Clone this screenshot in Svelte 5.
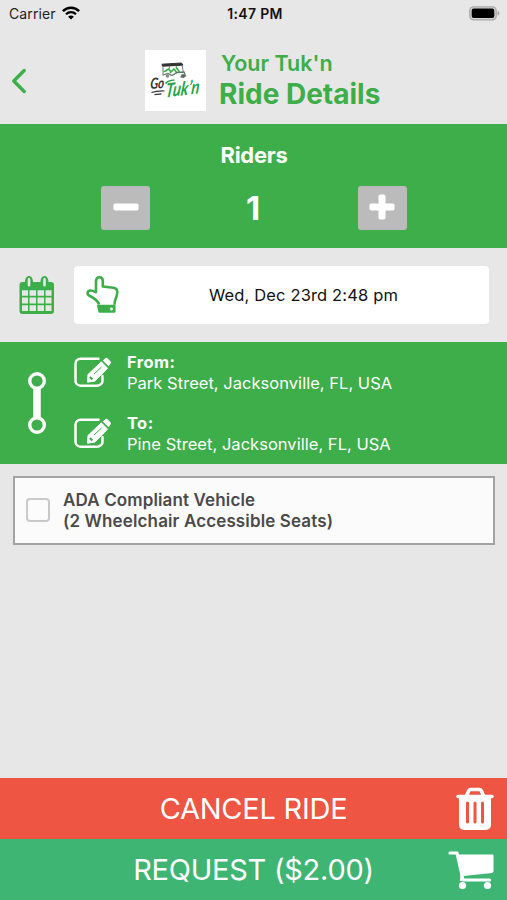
<script>
  let riders = $state(1);
  let ada = $state(false);
  const stops = [
    { label: 'From:', address: 'Park Street, Jacksonville, FL, USA' },
    { label: 'To:', address: 'Pine Street, Jacksonville, FL, USA' }
  ];
</script>

<div class="screen">
  <div class="status">
    <div class="carrier">
      <span>Carrier</span>
      <svg width="18" height="14" viewBox="0 0 18 14" fill="none" stroke="#000">
        <path d="M.9 5.1C5.4.5 12.6.5 17.1 5.1" stroke-width="2.5" />
        <path d="M4 8.2c2.8-2.8 7.2-2.8 10 0" stroke-width="2.3" />
        <path d="M9 13.6 6.1 10.7c1.6-1.5 4.2-1.5 5.8 0Z" fill="#000" stroke="none" />
      </svg>
    </div>
    <span class="time">1:47 PM</span>
    <svg class="battery" width="32" height="15" viewBox="0 0 32 15">
      <rect x=".8" y=".8" width="26.4" height="13" rx="3.8" fill="#d4d4d4" stroke="#a8a8a8" stroke-width="1.3" />
      <rect x="2.7" y="2.6" width="22.6" height="9.4" rx="2" fill="#000" />
      <path d="M28.6 5c2.4.6 2.4 4 0 4.6Z" fill="#a0a0a0" />
    </svg>
  </div>

  <header>
    <svg class="back" width="16" height="26" viewBox="0 0 16 26" fill="none" stroke="#3dae49" stroke-width="3.4" stroke-linecap="round" stroke-linejoin="round">
      <path d="M13.2 2.500 2.800 13l10.400 10.500" />
    </svg>
    <svg class="logo" width="61" height="61" viewBox="0 0 61 61">
      <rect width="61" height="61" fill="#fff" />
      <path d="M17 14.200 36.500 13 38 15.200 17.500 16.200Z" fill="#333" stroke="#333" />
      <path d="M18 16v9.500M24.500 16l-.5 3M31 15.500l1 4M37 15l1.500 8" stroke="#777" stroke-width="1" fill="none" />
      <path d="M18.500 21.500c3 .5 3-3 5.500-2l2.500 3M25 23l4-4 3 4M31 17l3.500 5" stroke="#3dae49" stroke-width="1.600" fill="none" />
      <path d="m18 25 5-1.500 4 2 5-3 7-.5 1.500 4-5 1" stroke="#5c7d62" stroke-width="1.300" fill="none" />
      <circle cx="22.500" cy="26" r="1.800" fill="#888" />
      <circle cx="38" cy="26" r="2" fill="#666" />
      <text transform="translate(5 39) rotate(-4) skewX(-8)" class="go" textLength="14" lengthAdjust="spacingAndGlyphs">Go</text>
      <path d="M6.500 42.500c4-1.300 8-1.700 13-1.500M9.500 44.600l7-.8" stroke="#333" stroke-width="1.200" fill="none" />
      <text transform="translate(20 47.500) rotate(-7) skewX(-14)" class="tuk" textLength="34" lengthAdjust="spacingAndGlyphs">Tuk’n</text>
      <path d="M20.500 33.500c2-2.400 5-3.200 9-3.500" stroke="#27a44a" stroke-width="1.600" fill="none" />
    </svg>
    <div class="titles">
      <span class="small">Your Tuk'n</span>
      <span class="big">Ride Details</span>
    </div>
  </header>

  <section class="riders">
    <span class="riders-label">Riders</span>
    <div class="stepper">
      <button aria-label="Fewer riders" onclick={() => (riders = Math.max(1, riders - 1))}>
        <svg width="26" height="26" viewBox="0 0 26 26"><rect x=".5" y="9.500" width="25" height="7" rx="1.800" fill="#fff" /></svg>
      </button>
      <span class="count">{riders}</span>
      <button aria-label="More riders" onclick={() => (riders += 1)}>
        <svg width="26" height="26" viewBox="0 0 26 26" fill="#fff"><rect x=".5" y="9.500" width="25" height="7" rx="1.800" /><rect x="9.500" y=".5" width="7" height="25" rx="1.800" /></svg>
      </button>
    </div>
  </section>

  <section class="when">
    <svg class="calendar" width="36" height="39" viewBox="0 0 36 39">
      <path fill="#3dae49" fill-rule="evenodd" d="M3.500 6H6c0-8 8-8 8 0h7.500c0-8 8-8 8 0H32a3 3 0 0 1 3 3v26a3 3 0 0 1-3 3H3.500a3 3 0 0 1-3-3V9a3 3 0 0 1 3-3Z" />
      <path fill="#e7e7e7" d="M8.700 4c0-3 2.600-3 2.600 0v5c0 2-2.600 2-2.600 0ZM24.200 4c0-3 2.600-3 2.600 0v5c0 2-2.600 2-2.600 0ZM3 14.200h6v5.500H3Zm7.500 0H17v5.500h-6.500Zm8 0H25v5.500h-6.500Zm8 0h6v5.500h-6ZM3 21.500h6v6H3Zm7.500 0H17v6h-6.500Zm8 0H25v6h-6.500Zm8 0h6v6h-6ZM3 29.300h6v5.700H3Zm7.500 0H17V35h-6.500Zm8 0H25V35h-6.500Zm8 0h6V35h-6Z" />
    </svg>
    <div class="date">
      <svg width="34" height="38" viewBox="0 0 34 38" fill="none" stroke="#3dae49" stroke-width="2.600" stroke-linejoin="round">
        <path d="M13 28.500C12 24.500 9 22.500 3 19.500c-2.500-1.500-1.500-5 1.500-5 2 0 4 1 5.500 1.700V5c0-5 6.800-5 6.800 0v5.500l10.700 1.200c3 .5 4 2.500 3.700 5-.3 5.500-2.700 6-2.700 12" />
        <path d="M12.300 30h16v5.500H13.600Z" fill="#3dae49" />
        <circle cx="25.500" cy="33" r="1.400" fill="#fff" stroke="none" />
      </svg>
      <span>Wed, Dec 23rd 2:48 pm</span>
    </div>
  </section>

  <section class="route">
    <svg class="line" width="20" height="64" viewBox="0 0 20 64" fill="none" stroke="#fff">
      <path d="M10 16v32" stroke-width="7.500" />
      <circle cx="10" cy="10" r="7.300" stroke-width="3.400" />
      <circle cx="10" cy="54" r="7.300" stroke-width="3.400" />
    </svg>
    <div class="stops">
      {#each stops as stop}
        <div class="stop">
          <svg width="38" height="31" viewBox="0 0 38 31">
            <path d="M24.500 1.700H6.500a5 5 0 0 0-5 5v17a5 5 0 0 0 5 5h17a5 5 0 0 0 5-5V19" fill="none" stroke="#fff" stroke-width="2.500" stroke-linecap="round" />
            <path d="M14 17.500 27.300 4.800l6.200 6.400L21 24l-7.500 1.200Z" fill="#fff" stroke="#fff" stroke-linejoin="round" />
            <path d="m28.800 3.500 2.500-2.300c.7-.6 1.500-.6 2.200 0l3 3.100c.7.700.7 1.500 0 2.200L34.600 9.200Z" fill="#fff" />
            <path d="m20 17 7.500-7" stroke="#3dae49" stroke-width="1" />
            <path d="m15.800 20 2.600 2.500" stroke="#3dae49" stroke-width="2" />
          </svg>
          <div class="place">
            <strong>{stop.label}</strong>
            <span>{stop.address}</span>
          </div>
        </div>
      {/each}
    </div>
  </section>

  <label class="ada">
    <input type="checkbox" bind:checked={ada} />
    <span class="ada-text"><span>ADA Compliant Vehicle</span><span>(2 Wheelchair Accessible Seats)</span></span>
  </label>

  <footer>
    <div class="action cancel">
      <span>CANCEL RIDE</span>
      <svg width="40" height="44" viewBox="0 0 40 44">
        <path d="M3 9.500h34M11.500 9l2.200-5.200c.5-1 1-1.300 2-1.300h8.600c1 0 1.500.3 2 1.300L28.500 9" fill="none" stroke="#fff" stroke-width="3.600" stroke-linecap="round" />
        <path d="M4 10h32v28a5 5 0 0 1-5 5H9a5 5 0 0 1-5-5Z" fill="#fff" />
        <path d="M12.500 16v19M20 16v19M27.500 16v19" stroke="#ee5542" stroke-width="3" stroke-linecap="round" />
      </svg>
    </div>
    <div class="action request">
      <span>REQUEST ($2.00)</span>
      <svg width="47" height="40" viewBox="0 0 47 40" fill="#fff">
        <path d="M2 3h7l6 27h26.500" fill="none" stroke="#fff" stroke-width="3.200" stroke-linecap="round" stroke-linejoin="round" />
        <path d="M10 4.500h34.500a1 1 0 0 1 1 1V21a2 2 0 0 1-1.500 2L15.500 26Z" />
        <path d="m14 25-1 6" stroke="#fff" stroke-width="2.500" />
        <circle cx="14.500" cy="35.500" r="3.600" /><circle cx="39.500" cy="35.500" r="3.600" />
      </svg>
    </div>
  </footer>
</div>

<style>
  :global(body) { margin: 0; }
  * { box-sizing: border-box; }
  svg { display: block; flex: none; overflow: visible; }
  .screen { width: 507px; height: 900px; background: #e7e7e7; font-family: Inter, "Liberation Sans", sans-serif; display: flex; flex-direction: column; overflow: hidden; white-space: nowrap; color: #111; }
  .status { height: 28px; display: grid; grid-template-columns: 1fr auto 1fr; align-items: center; padding: 0 6px 2px 9px; font-size: 14px; flex: none; }
  .carrier { display: flex; gap: 6px; align-items: center; }
  .carrier span { letter-spacing: .1px; color: #222; }
  .time { font-weight: 600; letter-spacing: .35px; }
  .battery { justify-self: end; }
  header { height: 96px; flex: none; display: flex; align-items: flex-start; color: #3dae49; }
  .back { margin: 40px 0 0 11px; }
  .logo { margin: 22px 0 0 118px; }
  .go { font: italic 700 15px Lato, sans-serif; fill: #333; }
  .tuk { font: italic 700 19px Lato, sans-serif; fill: #27a44a; }
  .titles { display: flex; flex-direction: column; margin: 20px 0 0 13px; }
  .small { font-size: 21.500px; font-weight: 600; line-height: 30px; padding-left: 2px; }
  .big { font-size: 28px; font-weight: 700; line-height: 32px; letter-spacing: 0; }
  .riders { height: 124px; flex: none; background: #3dae49; color: #fff; padding: 17px 100px 0 101px; display: flex; flex-direction: column; align-items: center; }
  .riders-label { font-size: 22px; font-weight: 700; line-height: 28px; letter-spacing: -.3px; }
  .stepper { width: 100%; margin-top: 17px; display: flex; justify-content: space-between; align-items: center; }
  button { width: 49px; height: 44px; border: 0; border-radius: 3px; background: #bbb; padding: 0 0 2px; display: grid; place-items: center; }
  .count { font-size: 33px; font-weight: 700; line-height: 44px; position: relative; left: -1px; }
  .when { height: 94px; flex: none; display: flex; align-items: center; padding: 0 18px 0 19px; gap: 19px; }
  .calendar { margin-top: 1px; }
  .date { flex: 1; height: 58px; background: #fff; border-radius: 4px; display: flex; align-items: center; padding: 0 12px; font-size: 16.500px; letter-spacing: .15px; }
  .date span { flex: 1; text-align: center; padding-left: 10px; }
  .route { height: 122px; flex: none; background: #3dae49; color: #fff; display: flex; align-items: center; padding-left: 27px; gap: 27px; }
  .stops { display: flex; flex-direction: column; height: 122px; }
  .stop { height: 61px; display: flex; gap: 15px; align-items: center; }
  .place { display: flex; flex-direction: column; font-size: 16.500px; line-height: 21px; letter-spacing: .03px; }
  .place strong { letter-spacing: .4px; }
  .ada { height: 69px; flex: none; margin: 12px 12px 0 13px; border: 2px solid #a3a3a3; background: #fbfbfb; display: flex; align-items: center; padding-left: 11px; gap: 13px; color: #4a4a4c; }
  input { appearance: none; width: 24px; height: 24px; margin: 0; border: 2px solid #c9c9c9; border-radius: 4px; background: #fcfcfc; flex: none; position: relative; top: -1px; }
  .ada-text { display: flex; flex-direction: column; font-size: 17px; font-weight: 600; line-height: 21px; letter-spacing: .13px; }
  footer { margin-top: auto; color: #fff; }
  .action { height: 61px; display: grid; grid-template-columns: 1fr auto 1fr; align-items: center; font-size: 29px; letter-spacing: -.25px; }
  .action span { grid-column: 2; }
  .action svg { justify-self: end; }
  .cancel { background: #ee5542; }
  .cancel svg { margin-right: 12px; }
  .request { background: #3fb573; }
  .request svg { margin-right: 12px; }
</style>
